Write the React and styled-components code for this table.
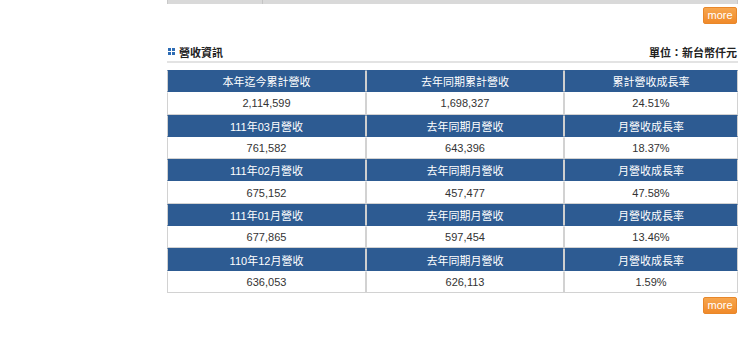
import styled, { createGlobalStyle } from "styled-components";

const GlobalStyle = createGlobalStyle`
body {
  margin: 0;
  background: #ffffff;
  font-family: "Liberation Sans", Arial, "Noto Sans CJK TC", sans-serif;
  font-size: 11px;
  color: #333333;
}
`;

// revenue rows: header labels then values
const groups = [
  {
    heads: ["本年迄今累計營收", "去年同期累計營收", "累計營收成長率"],
    values: ["2,114,599", "1,698,327", "24.51%"],
  },
  {
    heads: ["111年03月營收", "去年同期月營收", "月營收成長率"],
    values: ["761,582", "643,396", "18.37%"],
  },
  {
    heads: ["111年02月營收", "去年同期月營收", "月營收成長率"],
    values: ["675,152", "457,477", "47.58%"],
  },
  {
    heads: ["111年01月營收", "去年同期月營收", "月營收成長率"],
    values: ["677,865", "597,454", "13.46%"],
  },
  {
    heads: ["110年12月營收", "去年同期月營收", "月營收成長率"],
    values: ["636,053", "626,113", "1.59%"],
  },
];

const App = () => {
  return (
    <Page>
      <GlobalStyle />
      <Column>
        <PrevTable>
          <PrevCell $w="94px" />
          <PrevCell />
        </PrevTable>
        <MoreRow>
          <MoreButton>more</MoreButton>
        </MoreRow>

        <TitleBar>
          <Title>
            <TitleIcon>
              <i />
              <i />
              <i />
              <i />
            </TitleIcon>
            營收資訊
          </Title>
          <Unit>單位：新台幣仟元</Unit>
        </TitleBar>

        <Table>
          <colgroup>
            <col style={{ width: "199px" }} />
            <col style={{ width: "198px" }} />
            <col />
          </colgroup>
          <tbody>
            {groups.map((g, i) => [
              <tr key={"h" + i}>
                {g.heads.map((h) => (
                  <Th key={h}>{h}</Th>
                ))}
              </tr>,
              <tr key={"v" + i}>
                {g.values.map((v, j) => (
                  <Td key={j}>{v}</Td>
                ))}
              </tr>,
            ])}
          </tbody>
        </Table>

        <MoreRow $top="4px">
          <MoreButton>more</MoreButton>
        </MoreRow>
      </Column>
    </Page>
  );
};

const Page = styled.div`
  width: 750px;
  height: 337px;
  padding-left: 167px;
  box-sizing: border-box;
`;

const Column = styled.div`
  width: 571px;
  display: flex;
  flex-direction: column;
`;

const PrevTable = styled.div`
  display: flex;
  height: 4px;
  background: #d9d9d9;
  border-left: 1px solid #c9c9c9;
  border-right: 1px solid #c9c9c9;
`;

const PrevCell = styled.div`
  flex: ${(p) => (p.$w ? "0 0 " + p.$w : "1")};
  border-right: ${(p) => (p.$w ? "1px solid #c4c4c4" : "none")};
`;

const MoreRow = styled.div`
  display: flex;
  justify-content: flex-end;
  margin-top: ${(p) => p.$top || "3px"};
`;

const MoreButton = styled.button`
  width: 34px;
  height: 17px;
  padding: 0;
  margin-right: 1px;
  border: 1px solid #e8872a;
  border-radius: 2px;
  background: linear-gradient(#f7a64e, #f08a2a);
  color: #ffffff;
  font-family: "Liberation Sans", Arial, sans-serif;
  font-size: 11px;
  line-height: 15px;
  cursor: pointer;
`;

const TitleBar = styled.div`
  display: flex;
  justify-content: space-between;
  align-items: center;
  margin-top: 19px;
  height: 17px;
  border-bottom: 2px solid #e3e3e3;
  padding-bottom: 1px;
`;

const Title = styled.div`
  display: flex;
  align-items: center;
  gap: 4px;
  font-weight: bold;
  font-size: 11px;
  color: #222222;
  padding-left: 1px;
`;

const TitleIcon = styled.span`
  display: grid;
  grid-template-columns: 3px 3px;
  grid-template-rows: 3px 3px;
  gap: 1px;

  i {
    background: #2d6cb5;
  }
`;

const Unit = styled.div`
  font-weight: bold;
  font-size: 11px;
  color: #222222;
  padding-right: 1px;
`;

const Table = styled.table`
  margin-top: 7px;
  width: 571px;
  table-layout: fixed;
  border-collapse: separate;
  border-spacing: 0;
`;

const Th = styled.td`
  height: 20.3px;
  padding: 0;
  text-align: center;
  background: #2d5b92;
  color: #ffffff;
  font-size: 11px;
  border: 1px solid #cfcfcf;
  border-top-color: #2d5b92;
  border-bottom-color: #2d5b92;
`;

const Td = styled.td`
  height: 20.3px;
  padding: 0;
  text-align: center;
  background: #ffffff;
  color: #333333;
  font-size: 11px;
  border: 1px solid #d2d2d2;
  border-top-color: #ffffff;
`;

export default App;
